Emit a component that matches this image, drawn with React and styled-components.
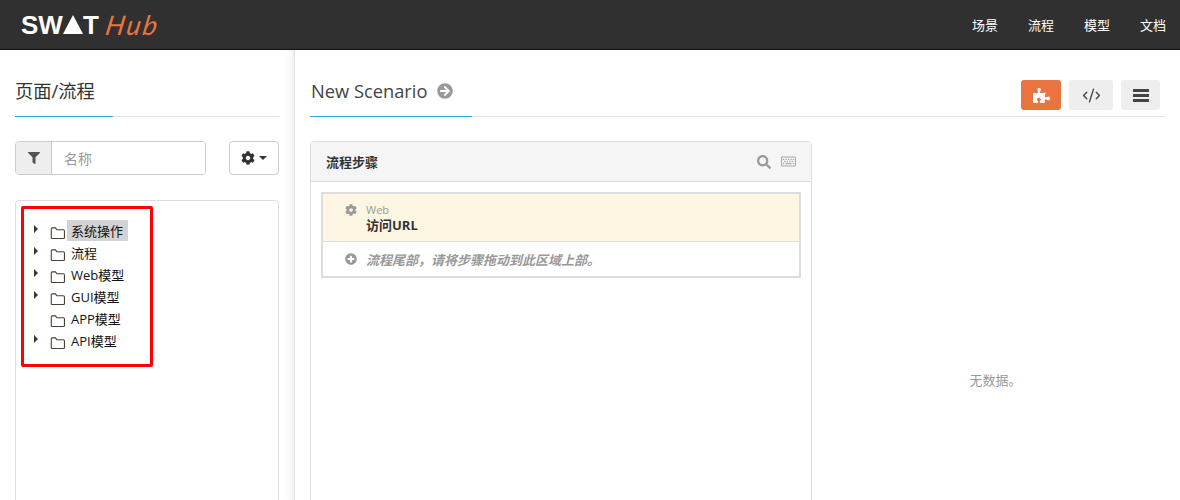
import React from 'react';
import styled, { createGlobalStyle } from 'styled-components';
import {
  FaFilter,
  FaCog,
  FaArrowCircleRight,
  FaPuzzlePiece,
  FaSearch,
  FaRegKeyboard,
  FaPlusCircle,
} from 'react-icons/fa';
import { CodeXml } from 'lucide-react';

const GlobalStyle = createGlobalStyle`
  html, body {
    margin: 0;
    padding: 0;
    background: #fff;
    overflow: hidden;
  }
  body {
    font-family: "Open Sans", "Noto Sans CJK SC", sans-serif;
    color: #333;
  }
`;

const TREE = [
  { name: '系统操作', hasChildren: true, selected: true },
  { name: '流程', hasChildren: true },
  { name: 'Web模型', hasChildren: true },
  { name: 'GUI模型', hasChildren: true },
  { name: 'APP模型', hasChildren: false },
  { name: 'API模型', hasChildren: true },
];

const FolderIcon = () => (
  <FolderSvg viewBox="0 0 16 13" width="16" height="12">
    <path
      d="M.7 11.4V2.2C.7 1.5 1.2 1 1.8 1h3.5l1.4 2h7c.7 0 1.3.5 1.3 1.2v7.2c0 .6-.5 1.1-1.1 1.1H1.8c-.6 0-1.1-.5-1.1-1.1z"
      fill="none"
      stroke="#4a4038"
      strokeWidth="1.2"
    />
  </FolderSvg>
);

const BarsIcon = () => (
  <svg viewBox="0 0 16 13" width="16" height="13">
    <rect x="0" y="0" width="16" height="3" fill="#444" />
    <rect x="0" y="5" width="16" height="3" fill="#444" />
    <rect x="0" y="10" width="16" height="3" fill="#444" />
  </svg>
);

const App = () => (
  <Page>
    <GlobalStyle />
    <Navbar>
      <Logo>
        <LogoMark>
          SW
          <LogoTriangle />
          T
        </LogoMark>
        <LogoHub>Hub</LogoHub>
      </Logo>
      <NavLinks>
        <NavLink>场景</NavLink>
        <NavLink>流程</NavLink>
        <NavLink>模型</NavLink>
        <NavLink>文档</NavLink>
      </NavLinks>
    </Navbar>
    <Body>
      <Sidebar>
        <Heading>
          <HeadingText>页面/流程</HeadingText>
        </Heading>
        <FilterRow>
          <InputGroup>
            <InputAddon>
              <FaFilter size={12} />
            </InputAddon>
            <SearchInput placeholder="名称" />
          </InputGroup>
          <GearButton>
            <FaCog size={14} />
            <Caret />
          </GearButton>
        </FilterRow>
        <TreePanel>
          <Highlight>
            {TREE.map((node) => (
              <TreeRow key={node.name}>
                <TreeArrow $visible={node.hasChildren} />
                <FolderIcon />
                <TreeLabel $selected={node.selected}>{node.name}</TreeLabel>
              </TreeRow>
            ))}
          </Highlight>
        </TreePanel>
      </Sidebar>
      <Main>
        <MainHeading>
          <ScenarioTitle>
            New Scenario
            <FaArrowCircleRight size={16} color="#999" />
          </ScenarioTitle>
          <Toolbar>
            <ToolButton $primary $width={40}>
              <FaPuzzlePiece size={17} />
            </ToolButton>
            <ToolButton $width={44}>
              <CodeXml size={19} strokeWidth={1.75} />
            </ToolButton>
            <ToolButton $width={39}>
              <BarsIcon />
            </ToolButton>
          </Toolbar>
        </MainHeading>
        <Columns>
          <StepsPanel>
            <PanelHeader>
              <PanelTitle>流程步骤</PanelTitle>
              <PanelIcons>
                <FaSearch size={14} />
                <FaRegKeyboard size={15} color="#aaa" />
              </PanelIcons>
            </PanelHeader>
            <PanelBody>
              <StepList>
                <StepRow>
                  <StepIcon>
                    <FaCog size={12} />
                  </StepIcon>
                  <div>
                    <StepType>Web</StepType>
                    <StepName>访问URL</StepName>
                  </div>
                </StepRow>
                <EndRow>
                  <StepIcon>
                    <FaPlusCircle size={12} />
                  </StepIcon>
                  <EndText>流程尾部，请将步骤拖动到此区域上部。</EndText>
                </EndRow>
              </StepList>
            </PanelBody>
          </StepsPanel>
          <EmptyColumn>无数据。</EmptyColumn>
        </Columns>
      </Main>
    </Body>
  </Page>
);

const Page = styled.div`
  width: 1180px;
  height: 500px;
  overflow: hidden;
`;

const Navbar = styled.header`
  box-sizing: border-box;
  height: 50px;
  background: #303030;
  border-bottom: 1px solid #111;
  display: flex;
  align-items: center;
  justify-content: space-between;
  padding: 0 14px 0 21px;
`;

const Logo = styled.div`
  display: flex;
  align-items: center;
`;

const LogoMark = styled.div`
  display: flex;
  align-items: center;
  font-family: "Liberation Sans", sans-serif;
  font-weight: 700;
  font-size: 26px;
  line-height: 30px;
  color: #fff;
`;

const LogoTriangle = styled.span`
  width: 0;
  height: 0;
  margin: 0 0 1px 0;
  border-left: 10px solid transparent;
  border-right: 10px solid transparent;
  border-bottom: 19px solid #fff;
`;

const LogoHub = styled.span`
  margin-left: 7px;
  font-family: "Lato", sans-serif;
  font-style: italic;
  font-weight: 400;
  font-size: 27px;
  letter-spacing: 2px;
  line-height: 30px;
  color: #e8743f;
  transform: skewX(-10deg);
`;

const NavLinks = styled.nav`
  display: flex;
  gap: 30px;
`;

const NavLink = styled.a`
  font-size: 13px;
  color: #fff;
`;

const Body = styled.div`
  display: flex;
  height: 450px;
`;

const Sidebar = styled.aside`
  box-sizing: border-box;
  width: 295px;
  flex: none;
  padding: 30px 15px 0;
  border-right: 1px solid #ddd;
  box-shadow: inset -10px 0 10px -8px rgba(0, 0, 0, 0.08);
`;

const Heading = styled.div`
  height: 36px;
  border-bottom: 1px solid #e2e2e2;
`;

const HeadingText = styled.h2`
  display: inline-block;
  box-sizing: border-box;
  margin: 0;
  width: 98px;
  height: 37px;
  border-bottom: 1px solid #3ba5dc;
  font-size: 18.3px;
  font-weight: 400;
  line-height: 22px;
`;

const FilterRow = styled.div`
  display: flex;
  justify-content: space-between;
  margin: 24px 0 25px;
`;

const InputGroup = styled.div`
  box-sizing: border-box;
  display: flex;
  width: 191px;
  height: 34px;
  border: 1px solid #ccc;
  border-radius: 4px;
  overflow: hidden;
`;

const InputAddon = styled.span`
  width: 35px;
  flex: none;
  display: flex;
  align-items: center;
  justify-content: center;
  background: #eee;
  border-right: 1px solid #ccc;
  color: #555;
`;

const SearchInput = styled.input`
  flex: 1;
  min-width: 0;
  border: 0;
  outline: 0;
  padding: 0 12px;
  font-family: inherit;
  font-size: 14px;
  &::placeholder {
    color: #999;
  }
`;

const GearButton = styled.button`
  box-sizing: border-box;
  width: 50px;
  height: 34px;
  padding: 0;
  display: flex;
  align-items: center;
  justify-content: center;
  gap: 4px;
  border: 1px solid #ccc;
  border-radius: 4px;
  background: #fff;
  color: #333;
`;

const Caret = styled.span`
  border-left: 4px solid transparent;
  border-right: 4px solid transparent;
  border-top: 4px solid #333;
`;

const TreePanel = styled.div`
  box-sizing: border-box;
  height: 320px;
  padding: 5px;
  border: 1px solid #ddd;
  border-radius: 4px;
`;

const Highlight = styled.div`
  box-sizing: border-box;
  width: 132px;
  height: 161px;
  padding: 11px 0 0 10px;
  border: 3px solid #f00;
  border-radius: 2px;
`;

const TreeRow = styled.div`
  height: 22px;
  display: flex;
  align-items: flex-start;
`;

const TreeArrow = styled.span`
  flex: none;
  width: 0;
  height: 0;
  margin: 5px 12px 0 0;
  border-top: 4px solid transparent;
  border-bottom: 4px solid transparent;
  border-left: 4px solid ${(p) => (p.$visible ? '#443333' : 'transparent')};
`;

const FolderSvg = styled.svg`
  flex: none;
  margin-top: 7px;
`;

const TreeLabel = styled.span`
  margin-left: 1px;
  padding: 0 5px 0 4px;
  height: 21px;
  font-size: 13px;
  line-height: 23px;
  color: #111;
  white-space: nowrap;
  background: ${(p) => (p.$selected ? '#d3d3d3' : 'transparent')};
`;

const Main = styled.main`
  flex: 1;
  min-width: 0;
  padding: 30px 14px 0 15px;
`;

const MainHeading = styled.div`
  height: 36px;
  display: flex;
  justify-content: space-between;
  border-bottom: 1px solid #e2e2e2;
`;

const ScenarioTitle = styled.h2`
  box-sizing: border-box;
  display: flex;
  align-items: flex-start;
  gap: 10px;
  margin: 0;
  width: 162px;
  height: 37px;
  padding-left: 1px;
  border-bottom: 1px solid #3ba5dc;
  font-size: 18.3px;
  font-weight: 400;
  line-height: 22px;
  color: #444;
  svg {
    margin-top: 3px;
  }
`;

const Toolbar = styled.div`
  display: flex;
  gap: 8px;
  margin-right: 6px;
`;

const ToolButton = styled.button`
  box-sizing: border-box;
  width: ${(p) => p.$width}px;
  height: 30px;
  padding: 0;
  display: flex;
  align-items: center;
  justify-content: center;
  border: 0;
  border-radius: 3px;
  background: ${(p) => (p.$primary ? '#e9743f' : '#eee')};
  color: ${(p) => (p.$primary ? '#fff' : '#444')};
`;

const Columns = styled.div`
  display: flex;
  gap: 8px;
  margin-top: 24px;
`;

const StepsPanel = styled.section`
  box-sizing: border-box;
  width: 502px;
  height: 400px;
  flex: none;
  border: 1px solid #ddd;
  border-radius: 4px 4px 0 0;
`;

const PanelHeader = styled.div`
  box-sizing: border-box;
  height: 40px;
  display: flex;
  align-items: center;
  justify-content: space-between;
  padding: 0 15px;
  background: #f5f5f5;
  border-bottom: 1px solid #ddd;
`;

const PanelTitle = styled.h3`
  margin: 0;
  font-size: 13px;
  font-weight: 700;
  color: #333;
`;

const PanelIcons = styled.div`
  display: flex;
  align-items: center;
  gap: 10px;
  color: #999;
`;

const PanelBody = styled.div`
  padding: 10px;
`;

const StepList = styled.div`
  border: 2px solid #ddd;
`;

const StepRow = styled.div`
  box-sizing: border-box;
  height: 48px;
  display: flex;
  padding: 10px 0 0 22px;
  background: #fdf6e3;
  border-bottom: 1px solid #ddd;
`;

const EndRow = styled.div`
  box-sizing: border-box;
  height: 34px;
  display: flex;
  align-items: center;
  padding-left: 22px;
`;

const StepIcon = styled.span`
  width: 21px;
  flex: none;
  color: #999;
  display: flex;
  line-height: 0;
`;

const StepType = styled.div`
  font-size: 11px;
  line-height: 12px;
  color: #999;
`;

const StepName = styled.div`
  font-size: 13px;
  font-weight: 700;
  line-height: 18px;
  color: #333;
`;

const EndText = styled.span`
  font-size: 13px;
  font-style: italic;
  font-weight: 700;
  color: #999;
`;

const EmptyColumn = styled.div`
  flex: 1;
  padding: 230px 0 0 5px;
  text-align: center;
  font-size: 13px;
  line-height: 18px;
  color: #999;
`;

export default App;
